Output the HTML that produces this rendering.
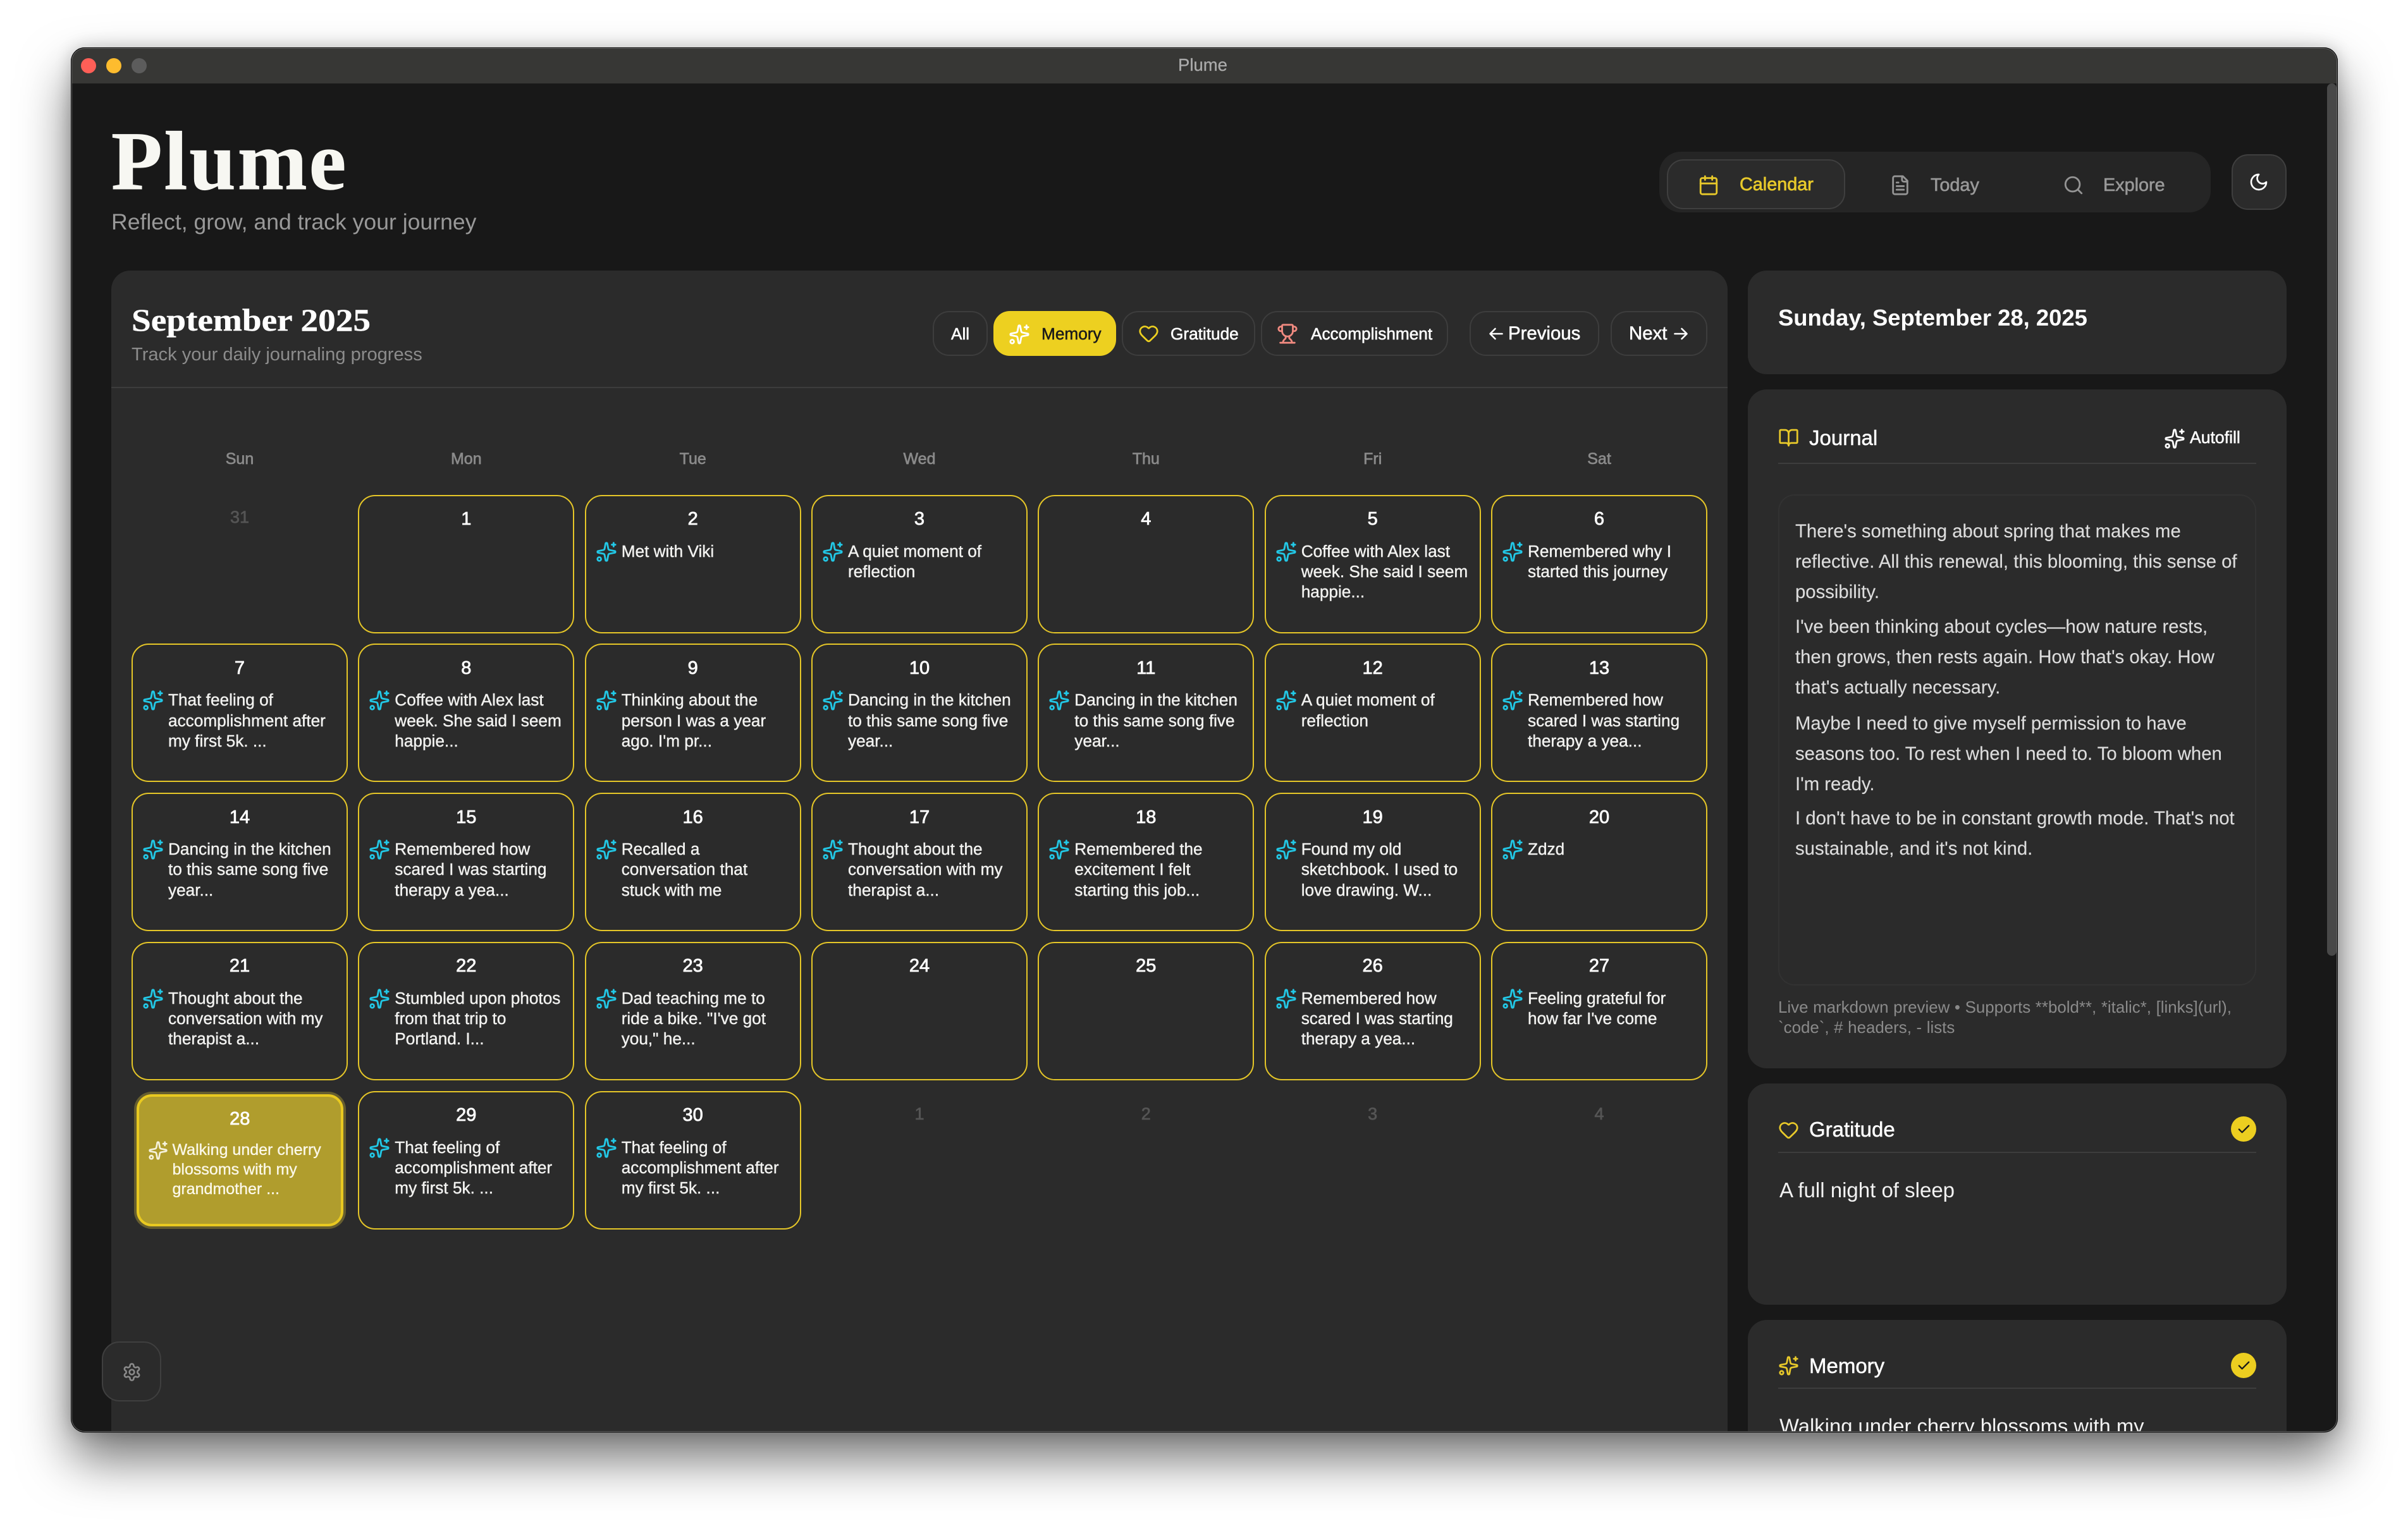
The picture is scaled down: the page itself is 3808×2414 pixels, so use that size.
<!DOCTYPE html>
<html><head><meta charset="utf-8"><title>Plume</title>
<style>
*{box-sizing:border-box;margin:0;padding:0}
html,body{width:3808px;height:2414px;background:#fff;overflow:hidden;font-family:"Liberation Sans",sans-serif}
.win{position:absolute;left:112px;top:75px;width:3585px;height:2191px;border-radius:22px;overflow:hidden;background:#181818}
.shadow{position:absolute;left:112px;top:75px;width:3585px;height:2191px;border-radius:22px;box-shadow:0 42px 80px rgba(0,0,0,.55),0 0 26px rgba(0,0,0,.2)}
.in{position:absolute;left:-112px;top:-75px;width:3808px;height:2414px}
.edge{position:absolute;left:112px;top:75px;width:3585px;height:2191px;border-radius:22px;box-shadow:inset 0 0 0 1px #000,inset 0 0 0 2px #666;z-index:5}
.a{position:absolute;white-space:nowrap}
.m{-webkit-text-stroke:.55px currentColor}
svg{position:absolute;fill:none;stroke:currentColor;stroke-width:2;stroke-linecap:round;stroke-linejoin:round;overflow:visible}
.card{position:absolute;background:#2b2b2b;border-radius:30px}
.btn{position:absolute;top:492px;height:71px;border:2px solid #3d3d3d;border-radius:26px;background:#2b2b2b}
.line{position:absolute;height:2px;background:#3d3d3d}
.t26{font-size:26.2px;line-height:36px;top:510px;color:#fff}
.wd{position:absolute;top:712px;width:342px;text-align:center;font-size:25px;line-height:28px;color:#8a8a8a;-webkit-text-stroke:.7px #8a8a8a}
.c{position:absolute;width:342px;height:219px;border:2.5px solid #e5c628;border-radius:27px}
.c b{position:absolute;left:0;right:0;top:22.5px;text-align:center;font-size:29px;line-height:28px;font-weight:400;color:#fff;-webkit-text-stroke:.8px #fff}
.c svg{left:15px;top:71px;width:34px;height:34px;color:#22c8e6}
.c p{position:absolute;left:56px;top:71px;font-size:26.2px;line-height:32.3px;color:#f2f2f0;white-space:nowrap;-webkit-text-stroke:.4px #f2f2f0}
.sel{left:215.5px;top:1731px;width:327.5px;height:209px;border:4px solid #e9c920;background:#b09d2d;border-radius:24px;box-shadow:0 0 0 4px #665e30}
.sel b{top:21px}
.sel svg{left:14px;top:68.5px;width:32px;height:32px;color:#f6f2dc}
.sel p{left:53px;top:68.5px;font-size:25px;line-height:31px;color:#fbf8e8;-webkit-text-stroke:.35px #fbf8e8}
.f{position:absolute;width:342px;text-align:center;font-size:27px;line-height:28px;color:#555;-webkit-text-stroke:.7px #555}
.j{position:absolute;left:2839px;font-size:29.3px;line-height:48px;color:#dcdcdc;white-space:nowrap;-webkit-text-stroke:.15px #dcdcdc}
.chk{position:absolute;left:3528px;width:40px;height:40px;border-radius:50%;background:#ecce20}
.chk svg{left:8.5px;top:8.5px;width:23px;height:23px;color:#1a1a1a;stroke-width:2.4}
.h{font-size:33px;line-height:40px;color:#fff;left:2861px;-webkit-text-stroke:.5px #fff}
</style></head><body>
<svg width="0" height="0" style="position:absolute">
<symbol id="sp" viewBox="0 0 24 24"><path d="M11.017 2.814a1 1 0 0 1 1.966 0l1.051 5.558a2 2 0 0 0 1.594 1.594l5.558 1.051a1 1 0 0 1 0 1.966l-5.558 1.051a2 2 0 0 0-1.594 1.594l-1.051 5.558a1 1 0 0 1-1.966 0l-1.051-5.558a2 2 0 0 0-1.594-1.594l-5.558-1.051a1 1 0 0 1 0-1.966l5.558-1.051a2 2 0 0 0 1.594-1.594z"/><path d="M20 2v4"/><path d="M22 4h-4"/><circle cx="4" cy="20" r="2"/></symbol>
<symbol id="he" viewBox="0 0 24 24"><path d="M2 9.5a5.5 5.5 0 0 1 9.591-3.676.56.56 0 0 0 .818 0A5.49 5.49 0 0 1 22 9.5c0 2.29-1.5 4-3 5.5l-5.492 5.313a2 2 0 0 1-3 .019L5 15c-1.5-1.5-3-3.2-3-5.5"/></symbol>
<symbol id="tr" viewBox="0 0 24 24"><path d="M10 14.66v1.626a2 2 0 0 1-.976 1.696A5 5 0 0 0 7 21.978"/><path d="M14 14.66v1.626a2 2 0 0 0 .976 1.696A5 5 0 0 1 17 21.978"/><path d="M18 9h1.5a1 1 0 0 0 0-5H18"/><path d="M4 22h16"/><path d="M6 9a6 6 0 0 0 12 0V3a1 1 0 0 0-1-1H7a1 1 0 0 0-1 1z"/><path d="M6 9H4.5a1 1 0 0 1 0-5H6"/></symbol>
<symbol id="ca" viewBox="0 0 24 24"><path d="M8 2v4"/><path d="M16 2v4"/><rect width="18" height="18" x="3" y="4" rx="2"/><path d="M3 10h18"/></symbol>
<symbol id="fi" viewBox="0 0 24 24"><path d="M15 2H6a2 2 0 0 0-2 2v16a2 2 0 0 0 2 2h12a2 2 0 0 0 2-2V7Z"/><path d="M14 2v4a2 2 0 0 0 2 2h4"/><path d="M10 9H8"/><path d="M16 13H8"/><path d="M16 17H8"/></symbol>
<symbol id="se" viewBox="0 0 24 24"><path d="m21 21-4.34-4.34"/><circle cx="11" cy="11" r="8"/></symbol>
<symbol id="mo" viewBox="0 0 24 24"><path d="M12 3a6 6 0 0 0 9 9 9 9 0 1 1-9-9Z"/></symbol>
<symbol id="bo" viewBox="0 0 24 24"><path d="M12 7v14"/><path d="M3 18a1 1 0 0 1-1-1V4a1 1 0 0 1 1-1h5a4 4 0 0 1 4 4 4 4 0 0 1 4-4h5a1 1 0 0 1 1 1v13a1 1 0 0 1-1 1h-6a3 3 0 0 0-3 3 3 3 0 0 0-3-3z"/></symbol>
<symbol id="ge" viewBox="0 0 24 24"><path d="M12.22 2h-.44a2 2 0 0 0-2 2v.18a2 2 0 0 1-1 1.73l-.43.25a2 2 0 0 1-2 0l-.15-.08a2 2 0 0 0-2.73.73l-.22.38a2 2 0 0 0 .73 2.73l.15.1a2 2 0 0 1 1 1.72v.51a2 2 0 0 1-1 1.74l-.15.09a2 2 0 0 0-.73 2.73l.22.38a2 2 0 0 0 2.73.73l.15-.08a2 2 0 0 1 2 0l.43.25a2 2 0 0 1 1 1.73V20a2 2 0 0 0 2 2h.44a2 2 0 0 0 2-2v-.18a2 2 0 0 1 1-1.73l.43-.25a2 2 0 0 1 2 0l.15.08a2 2 0 0 0 2.73-.73l.22-.39a2 2 0 0 0-.73-2.73l-.15-.08a2 2 0 0 1-1-1.74v-.5a2 2 0 0 1 1-1.74l.15-.09a2 2 0 0 0 .73-2.73l-.22-.38a2 2 0 0 0-2.73-.73l-.15.08a2 2 0 0 1-2 0l-.43-.25a2 2 0 0 1-1-1.73V4a2 2 0 0 0-2-2z"/><circle cx="12" cy="12" r="3"/></symbol>
<symbol id="ch" viewBox="0 0 24 24"><path d="M20 6 9 17l-5-5"/></symbol>
</svg>
<div class="shadow"></div>
<div class="win"><div class="in">
  <!-- title bar -->
  <div class="a" style="left:112px;top:75px;width:3585px;height:57px;background:#373735"></div>
  <div class="a" style="left:128px;top:92px;width:24px;height:24px;border-radius:50%;background:#ff5f57"></div>
  <div class="a" style="left:168px;top:92px;width:24px;height:24px;border-radius:50%;background:#febc2e"></div>
  <div class="a" style="left:208px;top:92px;width:24px;height:24px;border-radius:50%;background:#5c5c5c"></div>
  <div class="a" style="left:1700px;width:404px;text-align:center;top:88px;font-size:27.5px;line-height:30px;color:#aaa;-webkit-text-stroke:.3px #aaa">Plume</div>
  <div class="a" style="left:3680px;top:132px;width:15px;height:1380px;border-radius:8px;background:#484848"></div>

  <!-- header -->
  <div class="a" style="left:176px;top:190px;font-family:'Liberation Serif',serif;font-weight:700;font-size:132px;line-height:130px;letter-spacing:3px;color:#f7f7f2;-webkit-text-stroke:1px #f7f7f2">Plume</div>
  <div class="a" style="left:176px;top:330px;font-size:35.6px;line-height:42px;color:#999">Reflect, grow, and track your journey</div>

  <!-- nav -->
  <div class="a" style="left:2624px;top:240px;width:872px;height:96px;border-radius:34px;background:#252525"></div>
  <div class="a" style="left:2636px;top:252px;width:282px;height:79px;border-radius:26px;background:#2b2b2b;border:2px solid #3f3f3f"></div>
  <svg style="left:2685px;top:275.6px;width:34px;height:34px;color:#e8c92a"><use href="#ca"/></svg>
  <div class="a" style="left:2751px;top:274px;font-size:28.8px;line-height:36px;color:#e8c92a;-webkit-text-stroke:.7px #e8c92a">Calendar</div>
  <svg style="left:2988px;top:276px;width:34px;height:34px;color:#949494"><use href="#fi"/></svg>
  <div class="a" style="left:3053px;top:275px;font-size:28.8px;line-height:36px;color:#999;-webkit-text-stroke:.6px #999">Today</div>
  <svg style="left:3262px;top:276px;width:34px;height:34px;color:#949494"><use href="#se"/></svg>
  <div class="a" style="left:3326px;top:275px;font-size:28.8px;line-height:36px;color:#999;-webkit-text-stroke:.6px #999">Explore</div>
  <div class="a" style="left:3529px;top:244px;width:87px;height:88px;border-radius:26px;background:#2b2b2b;border:2px solid #3f3f3f"></div>
  <svg style="left:3556px;top:272px;width:32px;height:32px;color:#fff"><use href="#mo"/></svg>

  <!-- calendar card -->
  <div class="card" style="left:176px;top:428px;width:2556px;height:1900px"></div>
  <div class="a" style="left:208px;top:476px;font-family:'Liberation Serif',serif;font-weight:700;font-size:50px;line-height:60px;color:#fff;transform:scaleX(1.105);transform-origin:left center;-webkit-text-stroke:.4px #fff">September 2025</div>
  <div class="a" style="left:208px;top:543px;font-size:29.1px;line-height:36px;color:#8c8c8c">Track your daily journaling progress</div>
  <div class="line" style="left:176px;top:612px;width:2556px"></div>

  <div class="btn" style="left:1475px;width:87px"></div>
  <div class="a m t26" style="left:1504px">All</div>
  <div class="btn" style="left:1571px;width:194px;background:#edd020;border-color:#edd020"></div>
  <svg style="left:1594.6px;top:511.6px;width:34px;height:34px;color:#fff"><use href="#sp"/></svg>
  <div class="a t26" style="left:1647px;color:#1a1a1a;-webkit-text-stroke:.5px #1a1a1a">Memory</div>
  <div class="btn" style="left:1774px;width:211px"></div>
  <svg style="left:1799.6px;top:511px;width:33px;height:33px;color:#edd020"><use href="#he"/></svg>
  <div class="a m t26" style="left:1851px">Gratitude</div>
  <div class="btn" style="left:1994px;width:296px"></div>
  <svg style="left:2018.6px;top:511px;width:34px;height:34px;color:#f08a80"><use href="#tr"/></svg>
  <div class="a m t26" style="left:2073px">Accomplishment</div>
  <div class="btn" style="left:2324px;width:205px"></div>
  <svg viewBox="0 0 22 20" style="left:2355px;top:518px;width:22px;height:20px;color:#fff;stroke-width:2.6"><path d="M20.5 10H2M9.5 2 1.5 10l8 8"/></svg>
  <div class="a m" style="left:2385px;top:510px;font-size:29.4px;line-height:36px;color:#fff">Previous</div>
  <div class="btn" style="left:2547px;width:153px"></div>
  <div class="a m" style="left:2576px;top:510px;font-size:29.4px;line-height:36px;color:#fff">Next</div>
  <svg viewBox="0 0 22 20" style="left:2647px;top:518px;width:22px;height:20px;color:#fff;stroke-width:2.6"><path d="M1.5 10H20M12.5 2l8 8-8 8"/></svg>

  <div class="wd" style="left:208px">Sun</div>
  <div class="wd" style="left:566.3px">Mon</div>
  <div class="wd" style="left:924.7px">Tue</div>
  <div class="wd" style="left:1283px">Wed</div>
  <div class="wd" style="left:1641.3px">Thu</div>
  <div class="wd" style="left:1999.7px">Fri</div>
  <div class="wd" style="left:2358px">Sat</div>

  <!-- row 1 -->
  <div class="f" style="left:208px;top:804px">31</div>
  <div class="c" style="left:566.3px;top:782.5px"><b>1</b></div>
  <div class="c" style="left:924.7px;top:782.5px"><b>2</b><svg><use href="#sp"/></svg><p>Met with Viki</p></div>
  <div class="c" style="left:1283px;top:782.5px"><b>3</b><svg><use href="#sp"/></svg><p>A quiet moment of<br>reflection</p></div>
  <div class="c" style="left:1641.3px;top:782.5px"><b>4</b></div>
  <div class="c" style="left:1999.7px;top:782.5px"><b>5</b><svg><use href="#sp"/></svg><p>Coffee with Alex last<br>week. She said I seem<br>happie...</p></div>
  <div class="c" style="left:2358px;top:782.5px"><b>6</b><svg><use href="#sp"/></svg><p>Remembered why I<br>started this journey</p></div>
  <!-- row 2 -->
  <div class="c" style="left:208px;top:1018.3px"><b>7</b><svg><use href="#sp"/></svg><p>That feeling of<br>accomplishment after<br>my first 5k. ...</p></div>
  <div class="c" style="left:566.3px;top:1018.3px"><b>8</b><svg><use href="#sp"/></svg><p>Coffee with Alex last<br>week. She said I seem<br>happie...</p></div>
  <div class="c" style="left:924.7px;top:1018.3px"><b>9</b><svg><use href="#sp"/></svg><p>Thinking about the<br>person I was a year<br>ago. I'm pr...</p></div>
  <div class="c" style="left:1283px;top:1018.3px"><b>10</b><svg><use href="#sp"/></svg><p>Dancing in the kitchen<br>to this same song five<br>year...</p></div>
  <div class="c" style="left:1641.3px;top:1018.3px"><b>11</b><svg><use href="#sp"/></svg><p>Dancing in the kitchen<br>to this same song five<br>year...</p></div>
  <div class="c" style="left:1999.7px;top:1018.3px"><b>12</b><svg><use href="#sp"/></svg><p>A quiet moment of<br>reflection</p></div>
  <div class="c" style="left:2358px;top:1018.3px"><b>13</b><svg><use href="#sp"/></svg><p>Remembered how<br>scared I was starting<br>therapy a yea...</p></div>
  <!-- row 3 -->
  <div class="c" style="left:208px;top:1254.1px"><b>14</b><svg><use href="#sp"/></svg><p>Dancing in the kitchen<br>to this same song five<br>year...</p></div>
  <div class="c" style="left:566.3px;top:1254.1px"><b>15</b><svg><use href="#sp"/></svg><p>Remembered how<br>scared I was starting<br>therapy a yea...</p></div>
  <div class="c" style="left:924.7px;top:1254.1px"><b>16</b><svg><use href="#sp"/></svg><p>Recalled a<br>conversation that<br>stuck with me</p></div>
  <div class="c" style="left:1283px;top:1254.1px"><b>17</b><svg><use href="#sp"/></svg><p>Thought about the<br>conversation with my<br>therapist a...</p></div>
  <div class="c" style="left:1641.3px;top:1254.1px"><b>18</b><svg><use href="#sp"/></svg><p>Remembered the<br>excitement I felt<br>starting this job...</p></div>
  <div class="c" style="left:1999.7px;top:1254.1px"><b>19</b><svg><use href="#sp"/></svg><p>Found my old<br>sketchbook. I used to<br>love drawing. W...</p></div>
  <div class="c" style="left:2358px;top:1254.1px"><b>20</b><svg><use href="#sp"/></svg><p>Zdzd</p></div>
  <!-- row 4 -->
  <div class="c" style="left:208px;top:1489.9px"><b>21</b><svg><use href="#sp"/></svg><p>Thought about the<br>conversation with my<br>therapist a...</p></div>
  <div class="c" style="left:566.3px;top:1489.9px"><b>22</b><svg><use href="#sp"/></svg><p>Stumbled upon photos<br>from that trip to<br>Portland. I...</p></div>
  <div class="c" style="left:924.7px;top:1489.9px"><b>23</b><svg><use href="#sp"/></svg><p>Dad teaching me to<br>ride a bike. "I've got<br>you," he...</p></div>
  <div class="c" style="left:1283px;top:1489.9px"><b>24</b></div>
  <div class="c" style="left:1641.3px;top:1489.9px"><b>25</b></div>
  <div class="c" style="left:1999.7px;top:1489.9px"><b>26</b><svg><use href="#sp"/></svg><p>Remembered how<br>scared I was starting<br>therapy a yea...</p></div>
  <div class="c" style="left:2358px;top:1489.9px"><b>27</b><svg><use href="#sp"/></svg><p>Feeling grateful for<br>how far I've come</p></div>
  <!-- row 5 -->
  <div class="c sel"><b>28</b><svg><use href="#sp"/></svg><p>Walking under cherry<br>blossoms with my<br>grandmother ...</p></div>
  <div class="c" style="left:566.3px;top:1725.7px"><b>29</b><svg><use href="#sp"/></svg><p>That feeling of<br>accomplishment after<br>my first 5k. ...</p></div>
  <div class="c" style="left:924.7px;top:1725.7px"><b>30</b><svg><use href="#sp"/></svg><p>That feeling of<br>accomplishment after<br>my first 5k. ...</p></div>
  <div class="f" style="left:1283px;top:1748px">1</div>
  <div class="f" style="left:1641.3px;top:1748px">2</div>
  <div class="f" style="left:1999.7px;top:1748px">3</div>
  <div class="f" style="left:2358px;top:1748px">4</div>

  <!-- settings -->
  <div class="a" style="left:161px;top:2122px;width:94px;height:95px;border-radius:28px;background:#2b2b2b;border:2px solid #3f3f3f"></div>
  <svg style="left:192.5px;top:2154.5px;width:31px;height:31px;color:#8a8a8a"><use href="#ge"/></svg>

  <!-- date card -->
  <div class="card" style="left:2764px;top:428px;width:852px;height:164px"></div>
  <div class="a" style="left:2812px;top:481px;font-size:36.4px;font-weight:700;line-height:44px;color:#fff">Sunday, September 28, 2025</div>

  <!-- journal card -->
  <div class="card" style="left:2764px;top:616px;width:852px;height:1074px"></div>
  <svg style="left:2811.6px;top:676px;width:33px;height:33px;color:#e8c92a"><use href="#bo"/></svg>
  <div class="a h" style="top:673px">Journal</div>
  <svg style="left:3421.6px;top:676.6px;width:34px;height:34px;color:#fff"><use href="#sp"/></svg>
  <div class="a m" style="left:3463px;top:674px;font-size:26.6px;line-height:36px;color:#fff">Autofill</div>
  <div class="line" style="left:2812px;top:732px;width:756px"></div>
  <div class="a" style="left:2812px;top:782px;width:756px;height:777px;border-radius:26px;border:2px solid #323232"></div>
  <div class="j" style="top:817px">There's something about spring that makes me<br>reflective. All this renewal, this blooming, this sense of<br>possibility.</div>
  <div class="j" style="top:968px">I've been thinking about cycles—how nature rests,<br>then grows, then rests again. How that's okay. How<br>that's actually necessary.</div>
  <div class="j" style="top:1121px">Maybe I need to give myself permission to have<br>seasons too. To rest when I need to. To bloom when<br>I'm ready.</div>
  <div class="j" style="top:1271px">I don't have to be in constant growth mode. That's not<br>sustainable, and it's not kind.</div>
  <div class="a" style="left:2812px;top:1578px;font-size:25.9px;line-height:32px;color:#8a8a8a;word-spacing:.4px">Live markdown preview • Supports **bold**, *italic*, [links](url),<br>`code`, # headers, - lists</div>

  <!-- gratitude card -->
  <div class="card" style="left:2764px;top:1714px;width:852px;height:350px"></div>
  <svg style="left:2811.6px;top:1771px;width:33px;height:33px;color:#e8c92a"><use href="#he"/></svg>
  <div class="a h" style="top:1767px">Gratitude</div>
  <div class="chk" style="top:1766px"><svg><use href="#ch"/></svg></div>
  <div class="line" style="left:2812px;top:1822px;width:756px"></div>
  <div class="a" style="left:2814px;top:1863px;font-size:33px;line-height:40px;color:#f2f2f2">A full night of sleep</div>

  <!-- memory card -->
  <div class="card" style="left:2764px;top:2088px;width:852px;height:300px"></div>
  <svg style="left:2811.6px;top:2144px;width:33px;height:33px;color:#e8c92a"><use href="#sp"/></svg>
  <div class="a h" style="top:2141px">Memory</div>
  <div class="chk" style="top:2140px"><svg><use href="#ch"/></svg></div>
  <div class="line" style="left:2812px;top:2195px;width:756px"></div>
  <div class="a" style="left:2814px;top:2236px;font-size:32.8px;line-height:40px;color:#f2f2f2">Walking under cherry blossoms with my</div>
</div></div>
<div class="edge"></div>
</body></html>
